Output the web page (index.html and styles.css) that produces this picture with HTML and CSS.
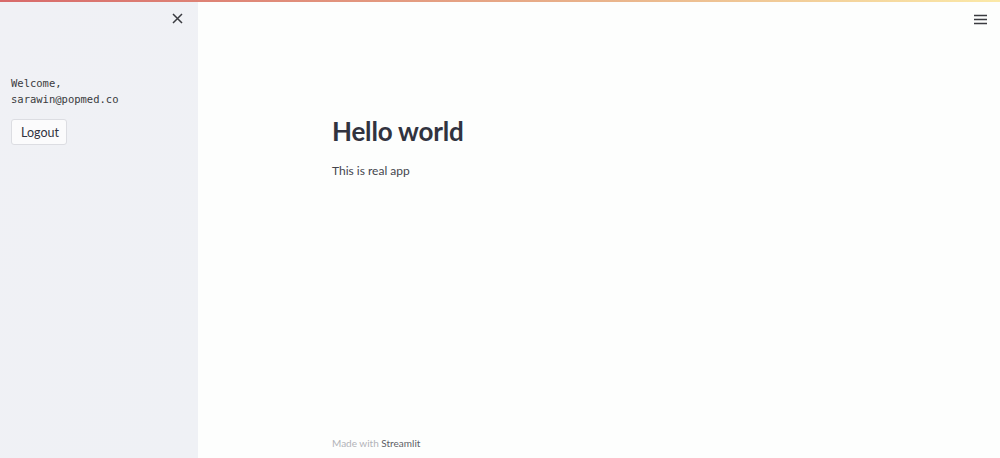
FILE: index.html
```html
<!DOCTYPE html>
<html>
<head>
<meta charset="utf-8">
<link rel="stylesheet" href="styles.css">
</head>
<body>
<div class="decoration"></div>
<div class="app">
  <aside class="sidebar">
    <div class="sidebar-top">
      <button class="close" aria-label="Close sidebar">
        <svg width="11" height="11" viewBox="0 0 11 11"><path d="M1 1 L10 10 M10 1 L1 10" stroke="#3a3b40" stroke-width="1.5" fill="none"/></svg>
      </button>
    </div>
    <div class="sidebar-content">
      <p class="mono">Welcome,<br>sarawin@popmed.co</p>
      <button class="btn">Logout</button>
    </div>
  </aside>
  <main class="main">
    <div class="main-top">
      <button class="menu" aria-label="Menu">
        <svg width="13" height="11" viewBox="0 0 13 11"><path d="M0 1.5 H13 M0 5.5 H13 M0 9.5 H13" stroke="#3a3b40" stroke-width="1.4"/></svg>
      </button>
    </div>
    <div class="block">
      <h1>Hello world</h1>
      <p class="text">This is real app</p>
    </div>
    <footer class="footer">Made with <span class="brand">Streamlit</span></footer>
  </main>
</div>
</body>
</html>
```
FILE: styles.css
```css
html, body {
  margin: 0;
  padding: 0;
  height: 100%;
}
body {
  font-family: "Source Sans Pro", "Lato", "Noto Sans", sans-serif;
  color: #31333f;
  background: #fdfefd;
  display: flex;
  flex-direction: column;
  overflow: hidden;
}
.decoration {
  height: 2px;
  flex: none;
  background: linear-gradient(90deg, #d86a6a, #e9b38b 60%, #fbe9a8);
}
.app {
  flex: 1;
  display: flex;
  min-height: 0;
}
.sidebar {
  width: 198px;
  flex: none;
  background: linear-gradient(115deg, #f0f1f5 0%, #eff1f5 100%);
  display: flex;
  flex-direction: column;
}
.sidebar-top {
  display: flex;
  justify-content: flex-end;
  padding: 9px 13px 0 0;
}
.close, .menu {
  border: none;
  background: transparent;
  padding: 2px;
  display: flex;
  cursor: pointer;
}
.sidebar-content {
  padding: 49px 11px 0 11px;
}
.mono {
  margin: 0;
  font-family: "DejaVu Sans Mono", "Liberation Mono", monospace;
  font-size: 10.5px;
  line-height: 16px;
  color: #3a3b40;
}
.btn {
  margin-top: 12px;
  font-family: "Lato", sans-serif;
  font-size: 12.5px;
  color: #31333f;
  background: #fbfbfc;
  border: 1px solid #dcdde2;
  border-radius: 3px;
  padding: 5px 9px 6px;
  height: 26px;
  width: 56px;
}
.main {
  flex: 1;
  display: flex;
  flex-direction: column;
  background: #fdfefd;
}
.main-top {
  display: flex;
  justify-content: flex-end;
  padding: 10px 11px 0 0;
}
.block {
  padding: 86px 0 0 134px;
  flex: 1;
}
h1 {
  margin: 0;
  font-family: "Lato", sans-serif;
  font-weight: 700;
  font-size: 26px;
  line-height: 36px;
  color: #31333f;
  letter-spacing: -0.2px;
}
.text {
  margin: 14px 0 0;
  font-family: "Lato", sans-serif;
  font-size: 12px;
  color: #44454d;
}
.footer {
  padding: 0 0 9px 134px;
  font-family: "Lato", sans-serif;
  font-size: 10px;
  color: #b2b3b8;
}
.brand {
  color: #5d5e66;
}
```
